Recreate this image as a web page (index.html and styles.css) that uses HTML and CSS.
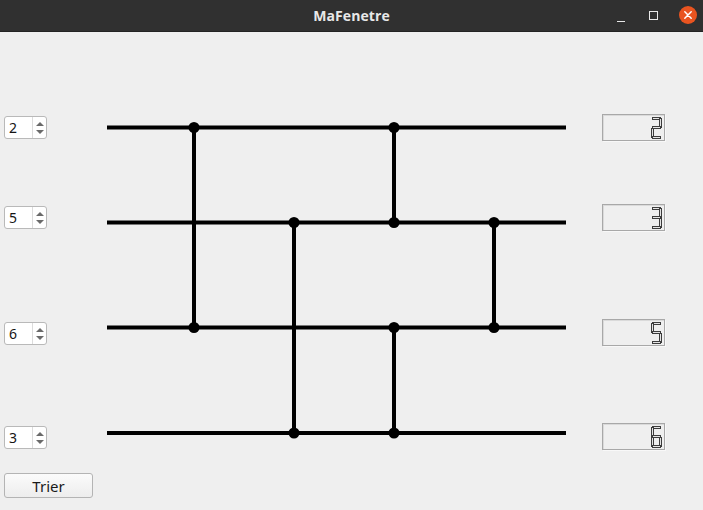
FILE: index.html
```html
<!DOCTYPE html>
<html lang="fr">
<head>
<meta charset="utf-8">
<title>MaFenetre</title>
<link rel="stylesheet" href="styles.css">
</head>
<body>
<div class="window">
  <header class="titlebar">
    <span class="title">MaFenetre</span>
    <div class="controls">
      <span class="ctl min"></span>
      <span class="ctl max"></span>
      <span class="ctl close">
        <svg width="18" height="18" viewBox="0 0 18 18"><circle cx="9" cy="9" r="9" fill="#e95420"/><path d="M5.8 5.8 L12.2 12.2 M12.2 5.8 L5.8 12.2" stroke="#fff" stroke-width="1.5" stroke-linecap="round"/></svg>
      </span>
    </div>
  </header>
  <main class="content">
    <div class="main">
      <div class="inputs">
        <div class="spin s1"><span class="val">2</span><span class="arrows"><i class="up"></i><i class="down"></i></span></div>
        <div class="spin s2"><span class="val">5</span><span class="arrows"><i class="up"></i><i class="down"></i></span></div>
        <div class="spin s3"><span class="val">6</span><span class="arrows"><i class="up"></i><i class="down"></i></span></div>
        <div class="spin s4"><span class="val">3</span><span class="arrows"><i class="up"></i><i class="down"></i></span></div>
      </div>
      <svg class="network" width="554" height="441" viewBox="47 32 554 441">
        <g stroke="#000" stroke-width="4">
          <line x1="107" y1="127.5" x2="566" y2="127.5"/>
          <line x1="107" y1="222.5" x2="566" y2="222.5"/>
          <line x1="107" y1="327.5" x2="566" y2="327.5"/>
          <line x1="107" y1="433" x2="566" y2="433"/>
          <line x1="194" y1="127.5" x2="194" y2="327.5"/>
          <line x1="294" y1="222.5" x2="294" y2="433"/>
          <line x1="394" y1="127.5" x2="394" y2="222.5"/>
          <line x1="394" y1="327.5" x2="394" y2="433"/>
          <line x1="494" y1="222.5" x2="494" y2="327.5"/>
        </g>
        <g fill="#000">
          <circle cx="194" cy="127.5" r="5.5"/>
          <circle cx="194" cy="327.5" r="5.5"/>
          <circle cx="394" cy="127.5" r="5.5"/>
          <circle cx="394" cy="222.5" r="5.5"/>
          <circle cx="294" cy="222.5" r="5.5"/>
          <circle cx="294" cy="433" r="5.5"/>
          <circle cx="494" cy="222.5" r="5.5"/>
          <circle cx="494" cy="327.5" r="5.5"/>
          <circle cx="394" cy="327.5" r="5.5"/>
          <circle cx="394" cy="433" r="5.5"/>
        </g>
      </svg>
      <div class="outputs">
        <div class="lcd l1"><span class="digit"><i class="a"></i><i class="b"></i><i class="g"></i><i class="e"></i><i class="d"></i></span><span class="lcd-text">2</span></div>
        <div class="lcd l2"><span class="digit"><i class="a"></i><i class="b"></i><i class="g"></i><i class="c"></i><i class="d"></i></span><span class="lcd-text">3</span></div>
        <div class="lcd l3"><span class="digit"><i class="a"></i><i class="f"></i><i class="g"></i><i class="c"></i><i class="d"></i></span><span class="lcd-text">5</span></div>
        <div class="lcd l4"><span class="digit"><i class="a"></i><i class="f"></i><i class="g"></i><i class="e"></i><i class="c"></i><i class="d"></i></span><span class="lcd-text">6</span></div>
      </div>
    </div>
    <div class="actions">
      <button class="btn">Trier</button>
    </div>
  </main>
</div>
</body>
</html>
```
FILE: styles.css
```css
* { box-sizing: border-box; }
html, body { margin: 0; padding: 0; }
body {
  width: 703px;
  height: 510px;
  overflow: hidden;
  background: #efefef;
  font-family: "Noto Sans", "DejaVu Sans", sans-serif;
}
.window { width: 703px; height: 510px; display: flex; flex-direction: column; }
.titlebar {
  height: 32px;
  background: #303030;
  border-bottom: 1px solid #232323;
  display: flex;
  align-items: center;
  justify-content: center;
  position: relative;
  flex: none;
}
.title {
  color: #e8e8e8;
  font-weight: bold;
  font-size: 14px;
  font-family: "Open Sans", "Noto Sans", sans-serif;
  letter-spacing: 0.1px;
}
.controls {
  position: absolute;
  right: 6px;
  top: 5px;
  height: 20px;
  display: flex;
  align-items: center;
}
.ctl { display: block; }
.min {
  width: 8px; height: 1px; border-top: 1.5px solid #e8e8e8;
  margin-top: 12px; margin-right: 24px;
}
.max {
  width: 9px; height: 9px; border: 1px solid #e8e8e8;
  margin-right: 21px;
}
.close { width: 18px; height: 18px; }
.close svg { display: block; }

.content {
  flex: 1;
  display: flex;
  flex-direction: column;
  padding: 0 4px;
}
.main { display: flex; height: 441px; }
.inputs { width: 43px; display: flex; flex-direction: column; }
.spin {
  width: 43px;
  height: 23px;
  background: #fff;
  border: 1px solid #b9b9b9;
  border-radius: 3px;
  display: flex;
  align-items: stretch;
}
.s1 { margin-top: 84px; }
.s2 { margin-top: 67px; }
.s3 { margin-top: 93px; }
.s4 { margin-top: 81px; }
.val {
  flex: 1;
  font-size: 14px;
  line-height: 21px;
  padding-left: 4px;
  color: #141414;
}
.arrows {
  width: 14px;
  border-left: 1px solid #dcdcdc;
  display: flex;
  flex-direction: column;
  align-items: center;
  justify-content: center;
  gap: 4px;
}
.arrows i { display: block; width: 0; height: 0; border-left: 4px solid transparent; border-right: 4px solid transparent; }
.arrows .up { border-bottom: 4px solid #6a6a6a; }
.arrows .down { border-top: 4px solid #6a6a6a; }

.network { display: block; flex: none; }

.outputs { display: flex; flex-direction: column; margin-left: 1px; }
.lcd {
  width: 63px;
  height: 27px;
  border: 1px solid #a8a8a8;
  box-shadow: inset 1px 1px 0 #dadada, 1px 1px 0 #f8f8f8;
  background: #efefef;
  display: flex;
  justify-content: flex-end;
  align-items: center;
  padding-right: 2px;
  position: relative;
}
.l1 { margin-top: 82px; }
.l2 { margin-top: 63px; }
.l3 { margin-top: 88px; }
.l4 { margin-top: 77px; }
.lcd-text {
  position: absolute;
  right: 3px;
  top: 2px;
  font-size: 16px;
  line-height: 20px;
  color: transparent;
}
.digit { position: relative; width: 11px; height: 22px; display: block; }
.digit i { position: absolute; display: block; border: 1px solid #3c3c3c; background: #e4e4e4; }
.digit .a { left: 1px; top: 0; width: 9px; height: 3px; }
.digit .g { left: 1px; top: 9.5px; width: 9px; height: 3px; }
.digit .d { left: 1px; bottom: 0; width: 9px; height: 3px; }
.digit .f { left: 0; top: 1px; width: 3px; height: 10px; }
.digit .b { right: 0; top: 1px; width: 3px; height: 10px; }
.digit .e { left: 0; top: 11px; width: 3px; height: 10px; }
.digit .c { right: 0; top: 11px; width: 3px; height: 10px; }

.actions { display: flex; }
.btn {
  width: 89px;
  height: 25px;
  border: 1px solid #b4b4b4;
  border-radius: 3px;
  background: linear-gradient(#fbfbfb, #ededed);
  font-family: "Noto Sans", "DejaVu Sans", sans-serif;
  font-size: 15px;
  color: #1a1a1a;
  padding: 0;
}
```
